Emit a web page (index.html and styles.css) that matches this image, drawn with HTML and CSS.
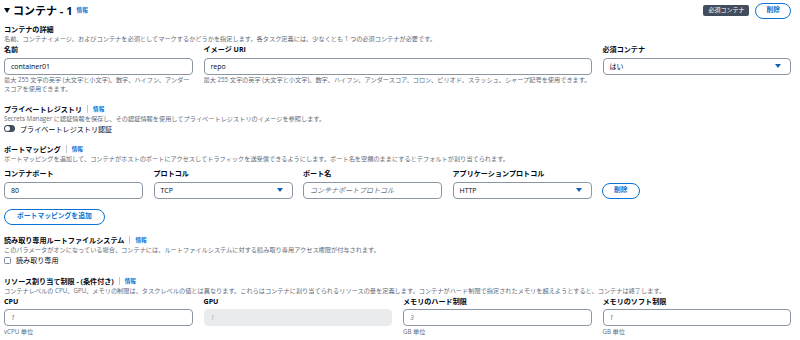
FILE: index.html
```html
<!DOCTYPE html>
<html>
<head>
    <meta charset="UTF-8">
    <title>コンテナ - 1</title>
    <link rel="stylesheet" href="styles.css">
</head>
<body>
<div class="panel">
    <div class="panel-header">
        <h2 class="panel-title">
            <svg class="caret" viewBox="0 0 6 5"><path d="M0 0 H6 L3 5 Z" fill="#000716"/></svg>
            コンテナ - 1<a class="info title-info">情報</a>
        </h2>
        <div class="header-actions">
            <span class="badge">必須コンテナ</span>
            <button class="btn">削除</button>
        </div>
    </div>

    <section class="block first">
        <div class="block-title">コンテナの詳細</div>
        <div class="block-desc">名前、コンテナイメージ、およびコンテナを必須としてマークするかどうかを指定します。各タスク定義には、少なくとも 1 つの必須コンテナが必要です。</div>
        <div class="grid4">
            <div class="field">
                <label>名前</label>
                <input class="input" value="container01">
                <div class="hint">最大 255 文字の英字 (大文字と小文字)、数字、ハイフン、アンダースコアを使用できます。</div>
            </div>
            <div class="field span2">
                <label>イメージ URI</label>
                <input class="input" value="repo">
                <div class="hint">最大 255 文字の英字 (大文字と小文字)、数字、ハイフン、アンダースコア、コロン、ピリオド、スラッシュ、シャープ記号を使用できます。</div>
            </div>
            <div class="field">
                <label>必須コンテナ</label>
                <div class="select"><span>はい</span><svg class="arrow" viewBox="0 0 6 4"><path d="M0 0 H6 L3 4 Z"/></svg></div>
            </div>
        </div>
    </section>

    <section class="block">
        <div class="block-title">プライベートレジストリ<span class="divider"></span><a class="info">情報</a></div>
        <div class="block-desc">Secrets Manager に認証情報を保存し、その認証情報を使用してプライベートレジストリのイメージを参照します。</div>
        <div class="option-row">
            <span class="toggle"><span class="knob"></span></span>
            <span>プライベートレジストリ認証</span>
        </div>
    </section>

    <section class="block">
        <div class="block-title">ポートマッピング<span class="divider"></span><a class="info">情報</a></div>
        <div class="block-desc">ポートマッピングを追加して、コンテナがホストのポートにアクセスしてトラフィックを送受信できるようにします。ポート名を空欄のままにするとデフォルトが割り当てられます。</div>
        <div class="port-row">
            <div class="field port-field">
                <label>コンテナポート</label>
                <input class="input" value="80">
            </div>
            <div class="field port-field">
                <label>プロトコル</label>
                <div class="select"><span>TCP</span><svg class="arrow" viewBox="0 0 6 4"><path d="M0 0 H6 L3 4 Z"/></svg></div>
            </div>
            <div class="field port-field">
                <label>ポート名</label>
                <input class="input" placeholder="コンテナポートプロトコル">
            </div>
            <div class="field port-field">
                <label>アプリケーションプロトコル</label>
                <div class="select"><span>HTTP</span><svg class="arrow" viewBox="0 0 6 4"><path d="M0 0 H6 L3 4 Z"/></svg></div>
            </div>
            <button class="btn row-btn">削除</button>
        </div>
        <button class="btn add-btn">ポートマッピングを追加</button>
    </section>

    <section class="block">
        <div class="block-title">読み取り専用ルートファイルシステム<span class="divider"></span><a class="info">情報</a></div>
        <div class="block-desc">このパラメータがオンになっている場合、コンテナには、ルートファイルシステムに対する読み取り専用アクセス権限が付与されます。</div>
        <div class="option-row">
            <span class="checkbox"></span>
            <span>読み取り専用</span>
        </div>
    </section>

    <section class="block">
        <div class="block-title">リソース割り当て制限 - (条件付き)<span class="divider"></span><a class="info">情報</a></div>
        <div class="block-desc">コンテナレベルの CPU、GPU、メモリの制限は、タスクレベルの値とは異なります。これらはコンテナに割り当てられるリソースの量を定義します。コンテナがハード制限で指定されたメモリを超えようとすると、コンテナは終了します。</div>
        <div class="grid4">
            <div class="field">
                <label>CPU</label>
                <input class="input" placeholder="1">
                <div class="hint">vCPU 単位</div>
            </div>
            <div class="field">
                <label>GPU</label>
                <input class="input" placeholder="1" disabled>
            </div>
            <div class="field">
                <label>メモリのハード制限</label>
                <input class="input" placeholder="3">
                <div class="hint">GB 単位</div>
            </div>
            <div class="field">
                <label>メモリのソフト制限</label>
                <input class="input" placeholder="1">
                <div class="hint">GB 単位</div>
            </div>
        </div>
    </section>
</div>
</body>
</html>
```

FILE: styles.css
```css
body {
    margin: 0px;
    font-family: 'Open Sans', 'Noto Sans CJK JP', sans-serif;
    color: #000716;
    background-color: #ffffff;
}
.panel {
    padding: 0px 9px 0px 4px;
}
.panel-header {
    display: flex;
    justify-content: space-between;
    align-items: center;
    height: 21px;
}
.panel-title {
    margin: 0px;
    display: flex;
    align-items: center;
    font-size: 11px;
    font-weight: 700;
    line-height: 21px;
}
.caret {
    width: 6px;
    height: 5px;
    margin-right: 3px;
}
.info {
    color: #0972d3;
    font-size: 5.6px;
    font-weight: 700;
}
.title-info {
    margin-left: 4px;
}
.header-actions {
    display: flex;
    align-items: center;
    gap: 6px;
}
.badge {
    background-color: #414d5c;
    color: #ffffff;
    font-size: 6px;
    line-height: 11px;
    padding: 0px 5px;
    border-radius: 2px;
}
.btn {
    height: 16px;
    padding: 0px 10px;
    border: 1.5px solid #0972d3;
    border-radius: 10px;
    background-color: #ffffff;
    color: #0972d3;
    font-family: 'Open Sans', 'Noto Sans CJK JP', sans-serif;
    font-size: 6.8px;
    font-weight: 700;
    line-height: 1;
}
/* sections */
.block {
    margin-top: 10.5px;
}
.block.first {
    margin-top: 3px;
}
.block-title {
    display: flex;
    align-items: center;
    font-size: 7.1px;
    font-weight: 700;
    line-height: 10px;
}
.divider {
    width: 1px;
    height: 8px;
    background-color: #c6c6cd;
    margin: 0px 5px;
}
.block-desc {
    font-size: 6.2px;
    line-height: 9px;
    color: #5f6b7a;
}
.grid4 {
    display: grid;
    grid-template-columns: repeat(4, 1fr);
    column-gap: 11px;
    margin-top: 1px;
}
.span2 {
    grid-column: span 2;
}
.field {
    display: flex;
    flex-direction: column;
    min-width: 0;
}
.field label {
    font-size: 7.1px;
    font-weight: 700;
    line-height: 10px;
    margin-bottom: 3.5px;
}
.input, .select {
    box-sizing: border-box;
    height: 17px;
    width: 100%;
    border: 1px solid #8c96a3;
    border-radius: 4px;
    padding: 0px 6px;
    font-family: 'Open Sans', 'Noto Sans CJK JP', sans-serif;
    font-size: 7px;
    color: #000716;
    background-color: #ffffff;
    outline: none;
}
.input::placeholder {
    color: #6b7785;
    font-style: italic;
}
.input:disabled {
    background-color: #e9ebed;
    border-color: #e9ebed;
}
.input:disabled::placeholder {
    color: #b0b8c2;
}
.select {
    display: flex;
    align-items: center;
    justify-content: space-between;
    padding-right: 9px;
}
.arrow {
    width: 6px;
    height: 4px;
    fill: #0f62b8;
}
.hint {
    font-size: 6.2px;
    line-height: 9px;
    color: #5f6b7a;
}
.grid4 .hint {
    margin-top: 0.5px;
}
.option-row {
    display: flex;
    align-items: center;
    gap: 5px;
    margin-top: 1px;
    font-size: 7.1px;
    line-height: 10px;
}
.toggle {
    box-sizing: border-box;
    display: flex;
    align-items: center;
    width: 11px;
    height: 7px;
    padding: 1px;
    border-radius: 4px;
    background-color: #414d5c;
}
.knob {
    width: 5px;
    height: 5px;
    border-radius: 50%;
    background-color: #ffffff;
}
.checkbox {
    box-sizing: border-box;
    width: 7px;
    height: 7px;
    border: 1px solid #7d8998;
    border-radius: 1.5px;
}
.port-row {
    display: flex;
    align-items: flex-end;
    gap: 10.5px;
    margin-top: 5px;
}
.port-field {
    width: 139px;
}
.row-btn {
    padding: 0px 11px;
}
.add-btn {
    display: block;
    margin-top: 10px;
    padding: 0px 12px;
}
```
